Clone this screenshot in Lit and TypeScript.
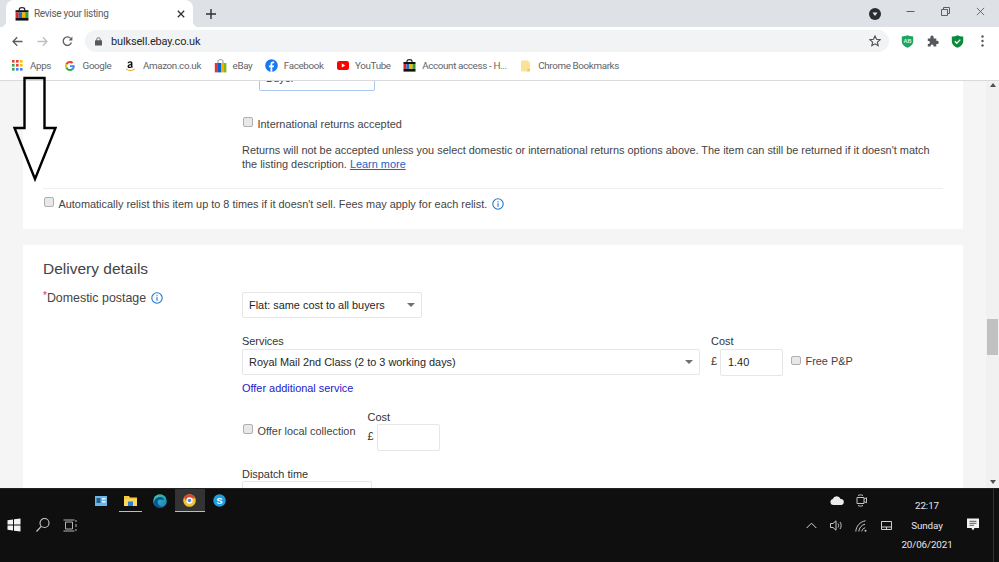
import { LitElement, html, svg, css } from "lit";
import { customElement } from "lit/decorators.js";

const shopBag = (w = 13) => html`<svg width=${w} height=${w} viewBox="0 0 13 13" class="ico">
  <path d="M4 3.5V2.2C4 1.2 4.8.6 6.5.6S9 1.2 9 2.2v1.3" fill="none" stroke="#222" stroke-width="1.1"/>
  <rect x=".5" y="3" width="12" height="2" fill="#111"/>
  <rect x=".5" y="5" width="3" height="5" fill="#d8262c"/><rect x="3.5" y="5" width="3" height="5" fill="#1c6fc4"/>
  <rect x="6.5" y="5" width="3" height="5" fill="#f2b705"/><rect x="9.5" y="5" width="3" height="5" fill="#3f9b3a"/>
  <rect x=".5" y="10" width="12" height="2.6" fill="#111"/></svg>`;

const ebayBag = html`<svg width="13" height="14" viewBox="0 0 13 14" class="ico">
  <path d="M4 4V2.4C4 1.2 4.9.6 6.5.6S9 1.2 9 2.4V4" fill="none" stroke="#8a8a8a" stroke-width="1"/>
  <path d="M.8 4h3.1v9.4H.8z" fill="#e53238"/><path d="M3.9 4H7v9.4H3.9z" fill="#0064d2"/>
  <path d="M7 4h3v9.4H7z" fill="#f5af02"/><path d="M10 4h2.4v9.4H10z" fill="#86b817"/></svg>`;

const googleG = html`<svg width="10" height="10" viewBox="0 0 48 48" class="ico">
  <path fill="#EA4335" d="M24 9.5c3.54 0 6.71 1.22 9.21 3.6l6.85-6.85C35.9 2.38 30.47 0 24 0 14.62 0 6.51 5.38 2.56 13.22l7.98 6.19C12.43 13.72 17.74 9.5 24 9.5z"/>
  <path fill="#4285F4" d="M46.98 24.55c0-1.57-.15-3.09-.38-4.55H24v9.02h12.94c-.58 2.96-2.26 5.48-4.78 7.18l7.73 6c4.51-4.18 7.09-10.36 7.09-17.65z"/>
  <path fill="#FBBC05" d="M10.53 28.59c-.48-1.45-.76-2.99-.76-4.59s.27-3.14.76-4.59l-7.98-6.19C.92 16.46 0 20.12 0 24c0 3.88.92 7.54 2.56 10.78l7.97-6.19z"/>
  <path fill="#34A853" d="M24 48c6.48 0 11.93-2.13 15.89-5.81l-7.73-6c-2.15 1.45-4.92 2.3-8.16 2.3-6.26 0-11.57-4.22-13.47-9.91l-7.98 6.19C6.51 42.62 14.62 48 24 48z"/></svg>`;

const appsGrid = html`<svg width="11" height="11" viewBox="0 0 11 11" class="ico">
  ${[
    ["#ea4335", 0, 0], ["#ea4335", 4, 0], ["#fbbc05", 8, 0],
    ["#34a853", 0, 4], ["#ea4335", 4, 4], ["#fbbc05", 8, 4],
    ["#34a853", 0, 8], ["#4285f4", 4, 8], ["#4285f4", 8, 8],
  ].map(([c, x, y]) => svg`<rect x=${x} y=${y} width="2.6" height="2.6" fill=${c}></rect>`)}</svg>`;

const amazon = html`<svg width="11" height="13" viewBox="0 0 13 14" class="ico">
  <path d="M6.9 5.2V4.6c0-.8-.4-1.2-1.1-1.2-.7 0-1.1.4-1.3 1L3 4.2C3.3 2.9 4.4 2 6 2c1.9 0 2.8.9 2.8 2.4v3.4c0 .4.2.7.5 1L8.2 10c-.4-.3-.7-.6-.9-1-.5.7-1.2 1.1-2.1 1.1-1.3 0-2.2-.8-2.2-2 0-1.7 1.5-2.7 3.9-2.9zm0 1.2c-1.3.1-2 .6-2 1.5 0 .6.3.9.9.9.8 0 1.1-.7 1.1-1.5z" fill="#111"/>
  <path d="M1.6 11.3c3 1.9 6.6 1.9 9.6 0" fill="none" stroke="#f29b1d" stroke-width="1.2" stroke-linecap="round"/></svg>`;

const facebook = html`<svg width="13" height="13" viewBox="0 0 13 13" class="ico">
  <circle cx="6.5" cy="6.5" r="6.3" fill="#1877f2"/>
  <path d="M7.3 12.8V8.2h1.5l.3-1.8H7.3V5.3c0-.6.3-1 1-1h.9V2.7c-.4-.1-.9-.1-1.3-.1-1.5 0-2.4.9-2.4 2.4v1.4H3.9v1.8h1.6v4.600z" fill="#fff"/></svg>`;

const youtube = html`<svg width="12" height="9" viewBox="0 0 12 9" class="ico">
  <rect width="12" height="9" rx="2.2" fill="#f00"/><path d="M4.8 2.4v4.2L8.3 4.5z" fill="#fff"/></svg>`;

const bookmarkFolder = html`<svg width="10" height="12" viewBox="0 0 11 12" class="ico">
  <path d="M1 0h6.5L10 2.5V11a1 1 0 0 1-1 1H1a1 1 0 0 1-1-1V1a1 1 0 0 1 1-1z" fill="#fde293"/><path d="M7 9h3v1.5L8.5 12H7z" fill="#f3c85a"/></svg>`;

const info = (s = 12) => html`<svg width=${s} height=${s} viewBox="0 0 12 12" class="ico">
  <circle cx="6" cy="6" r="5.2" fill="none" stroke="#2277cc" stroke-width="1.1"/>
  <rect x="5.45" y="5.2" width="1.1" height="3.6" fill="#2277cc"/><rect x="5.45" y="3.1" width="1.1" height="1.2" fill="#2277cc"/></svg>`;

const caret = html`<span class="caret"></span>`;

@customElement("app-root")
export class AppRoot extends LitElement {
  static styles = css`
    :host { display: flex; flex-direction: column; width: 999px; height: 562px; position: relative; overflow: hidden;
      font-family: "Liberation Sans", Arial, sans-serif; background: #fff; }
    .ico { display: block; flex: none; }
    .ui { font-family: Roboto, "Noto Sans", sans-serif; }

    .tabbar { height: 27px; background: #dee1e6; display: flex; align-items: center; flex: none; }
    .tab { position: relative; margin-left: 6px; width: 187px; height: 27px; background: #fff; border-radius: 8px 8px 0 0;
      display: flex; align-items: center; box-sizing: border-box; padding: 0 8px 0 9px; }
    .tab::before, .tab::after { content: ""; position: absolute; bottom: 0; width: 6px; height: 6px; }
    .tab::before { left: -6px; background: radial-gradient(circle at 0 0, transparent 6px, #fff 6.5px); }
    .tab::after { right: -6px; background: radial-gradient(circle at 100% 0, transparent 6px, #fff 6.5px); }
    .tab-title { flex: 1; margin-left: 5px; font-size: 10px; letter-spacing: -0.3px; color: #5a5d61; white-space: nowrap; }
    .plus { margin-left: 13px; }
    .spacer { flex: 1; }
    .profile { margin-right: 25px; }
    .win { display: flex; gap: 26px; margin: 0 14px 4px 0; align-items: center; }

    .toolbar { height: 26px; flex: none; display: flex; align-items: center; background: #fff; box-sizing: border-box; padding-top: 2px; }
    .nav { display: flex; align-items: center; gap: 14px; margin-left: 12px; }
    .omni { margin-left: 12px; width: 804px; height: 22px; border-radius: 11px; background: #f1f3f4; display: flex; align-items: center;
      box-sizing: border-box; padding: 0 8px 0 10px; }
    .url { margin-left: 9px; flex: 1; font-size: 11px; letter-spacing: -0.15px; color: #26282b; }
    .exts { display: flex; align-items: center; margin-left: 12px; gap: 12.5px; }
    .dots { margin-left: 4px; }

    .bookmarks { height: 28px; flex: none; box-sizing: border-box; border-bottom: 1px solid #d8dadd; background: #fff; padding-bottom: 2px;
      display: flex; align-items: center; padding-left: 11px; font-size: 9.8px; letter-spacing: -0.35px; color: #5f6368; }
    .bm { display: flex; align-items: center; gap: 6px; margin-right: 12.5px; white-space: nowrap; }
    .bm-ico { width: 13px; display: flex; justify-content: center; flex: none; }

    .viewport { flex: 1; min-height: 0; display: flex; overflow: hidden; background: #f5f5f5; }
    .page { flex: 1; box-sizing: border-box; padding: 0 23px; display: flex; flex-direction: column; color: #444; font-size: 10.92px; line-height: 14px; }
    .card { background: #fff; padding: 0 20px; flex: none; }
    .card1 { margin-top: -16px; padding-bottom: 18px; }
    .card2 { margin-top: 16px; padding-top: 14px; flex: 1; }
    .buyer { margin-left: 216px; width: 116px; height: 26px; box-sizing: border-box; border: 1.5px solid #a9c8ef; border-radius: 2px; padding: 5px 6px; color: #333; }
    .chk { display: block; flex: none; box-sizing: border-box; width: 9.5px; height: 9.5px; background: #e8e8e8; border: 1px solid #b0b0b0; border-radius: 2px; margin: 0 5px 0 1px; position: relative; top: -2px; }
    .row { display: flex; align-items: center; }
    .indent { margin-left: 199px; }
    .intl { margin-top: 26px; }
    .note { margin: 12px 0 0 199px; }
    a { color: #1d62c4; }
    .rule { margin-top: 17px; height: 1px; background: #eee; }
    .relist { margin-top: 8px; }
    .relist .ico { margin-left: 5px; }
    h2 { margin: 0; font-weight: 400; font-size: 15.5px; line-height: 20px; color: #444; }
    .dom { display: flex; margin-top: 11px; }
    .dom-label { width: 199px; flex: none; display: flex; align-items: center; height: 16px; font-size: 12.4px; color: #444; }
    .dom-label .ico { margin-left: 5px; }
    .req { color: #d33; font-size: 10px; align-self: flex-start; line-height: 10px; margin-top: 1px; }
    .select { box-sizing: border-box; height: 26px; border: 1px solid #e6e6e6; border-radius: 2px; display: flex; align-items: center; justify-content: space-between;
      padding: 0 6px; color: #262626; background: #fff; white-space: nowrap; }
    .flat { width: 180px; margin-top: 2px; }
    .caret { width: 0; height: 0; border-left: 4px solid transparent; border-right: 4px solid transparent; border-top: 4px solid #707070; }
    .lbl { line-height: 14px; color: #333; }
    .svc-row { display: flex; margin-top: 16px; }
    .svc { width: 458px; display: flex; flex-direction: column; gap: 1px; margin-right: 11px; }
    .cost { display: flex; flex-direction: column; gap: 1px; }
    .pound { width: 9px; color: #333; margin-bottom: 3px; }
    .input { box-sizing: border-box; width: 63px; height: 27px; border: 1px solid #e6e6e6; border-radius: 2px; padding: 5px 7px; color: #262626; }
    .free { margin-left: 8px; }
    .free-lbl { margin-bottom: 3px; }
    .link { margin-top: 5px; color: #2121c9; }
    .local { margin-top: 16px; display: flex; align-items: center; }
    .local .cost { margin-left: 12px; gap: 0; }
    .local .lbl { line-height: 13px; }
    .dispatch { margin-top: 16px; }
    .dis-sel { width: 130px; }

    .scroll { width: 13px; flex: none; background: #f1f1f1; display: flex; flex-direction: column; align-items: center; }
    .up { margin-top: 2px; border-left: 3.5px solid transparent; border-right: 3.5px solid transparent; border-bottom: 4px solid #505050; }
    .thumb { margin-top: 232px; width: 11px; height: 36px; background: #c1c1c1; }
    .down { margin-top: 125px; border-left: 3.5px solid transparent; border-right: 3.5px solid transparent; border-top: 4px solid #505050; }

    .arrow { position: absolute; left: 12px; top: 75px; }

    .taskbar { height: 74px; flex: none; background: #0f0f0f; display: flex; color: #e8e8e8; font-size: 9.8px; letter-spacing: -0.1px; border-top: 1px solid #222; box-sizing: border-box; }
    .tb-left { flex: 1; display: flex; flex-direction: column; }
    .apps { height: 23px; display: flex; padding-left: 86px; }
    .app { position: relative; width: 29.7px; height: 23px; display: flex; align-items: center; justify-content: center; }
    .app.open::after { content: ""; position: absolute; left: 3px; right: 3px; bottom: 0; height: 1.5px; background: #9cc3ec; }
    .app.active { background: #333; }
    .app.active::after { left: 0; right: 0; }
    .sys { height: 24px; margin-top: 1px; display: flex; align-items: center; padding-left: 7px; }
    .search { margin: 0 12px 0 14px; }
    .tb-right { display: flex; flex: none; width: 200px; }
    .tr-icons { width: 100px; margin-top: -1px; display: grid; grid-template-columns: repeat(4, 25px); grid-auto-rows: 25px; }
    .c { display: flex; align-items: center; justify-content: center; }
    .tr-clock { width: 56px; display: flex; flex-direction: column; align-items: center; padding-top: 7px; line-height: 19.5px; white-space: nowrap; }
    .tr-note { flex: 1; display: flex; padding: 29px 5px 0 11px; }
    .tr-line { align-self: stretch; width: 1px; background: #333; margin: -29px 0 0 auto; }
  `;

  render() {
    return html`
      <div class="tabbar ui">
        <div class="tab">${shopBag(14)}<span class="tab-title">Revise your listing</span>
          <svg width="8" height="8" viewBox="0 0 10 10" class="ico"><path d="M1 1l8 8M9 1l-8 8" stroke="#2e3033" stroke-width="1.6"/></svg>
        </div>
        <svg class="ico plus" width="10" height="10" viewBox="0 0 12 12"><path d="M6 0v12M0 6h12" stroke="#2e3033" stroke-width="1.7"/></svg>
        <div class="spacer"></div>
        <svg class="ico profile" width="12" height="12" viewBox="0 0 12 12"><circle cx="6" cy="6" r="6" fill="#2b2e31"/><path d="M3.5 4.6h5L6 8z" fill="#e8eaed"/></svg>
        <div class="win">
          <svg class="ico" width="9" height="9" viewBox="0 0 9 9"><path d="M.5 4.5h8" stroke="#5c5f62" stroke-width="1"/></svg>
          <svg class="ico" width="9" height="9" viewBox="0 0 9 9"><path d="M.5 2.5h6v6h-6zM2.5 2.5V.5h6v6h-2" fill="none" stroke="#5c5f62" stroke-width="1"/></svg>
          <svg class="ico" width="9" height="9" viewBox="0 0 10 10"><path d="M1 1l8 8M9 1l-8 8" stroke="#5c5f62" stroke-width="1"/></svg>
        </div>
      </div>

      <div class="toolbar ui">
        <div class="nav">
          <svg class="ico" width="11" height="11" viewBox="0 0 11 11"><path d="M10.5 5.5H1M5.2 1.2L1 5.5l4.2 4.3" fill="none" stroke="#5a5d61" stroke-width="1.3"/></svg>
          <svg class="ico" width="11" height="11" viewBox="0 0 11 11"><path d="M.5 5.5H10M5.8 1.2L10 5.5 5.8 9.8" fill="none" stroke="#bdc0c4" stroke-width="1.3"/></svg>
          <svg class="ico" width="11" height="11" viewBox="0 0 11 11"><path d="M9.4 6.5A4.2 4.2 0 1 1 8.6 2.4" fill="none" stroke="#5a5d61" stroke-width="1.3"/><path d="M10.4.6v3.8H6.6z" fill="#5a5d61"/></svg>
        </div>
        <div class="omni">
          <svg class="ico" width="7" height="9" viewBox="0 0 8 10"><path d="M2 4V2.6C2 1.4 2.8.7 4 .7s2 .7 2 1.9V4" fill="none" stroke="#55585c" stroke-width="1"/><rect y="3.7" width="8" height="6" rx=".8" fill="#55585c"/></svg>
          <span class="url">bulksell.ebay.co.uk</span>
          <svg class="ico" width="12" height="12" viewBox="0 0 12 12"><path d="M6 1l1.5 3.3 3.6.4-2.7 2.4.8 3.5L6 8.8 2.8 10.6l.8-3.5L.9 4.7l3.6-.4z" fill="none" stroke="#4c4f53" stroke-width="1.1"/></svg>
        </div>
        <div class="exts">
          <svg class="ico" width="13" height="13" viewBox="0 0 13 13"><path d="M.8 1.4C3 1.4 5 1 6.5.3 8 1 10 1.4 12.2 1.4v5.2c0 3-2.6 5.2-5.7 6.1C3.4 11.8.8 9.6.8 6.6z" fill="#1fa463"/><text x="6.5" y="7.8" text-anchor="middle" font-size="5.5" font-weight="700" fill="#d6f2e2" font-family="Liberation Sans">AB</text></svg>
          <svg class="ico" width="12" height="12" viewBox="0 0 12 12"><path d="M.8 3.4h2.6C3 1.7 3.9.6 5 .6s2 1.1 1.6 2.8h2.7v2.5c1.5-.4 2.4.4 2.4 1.5s-.9 2-2.4 1.5v2.7H6.500c.3-1.400-.4-2.200-1.400-2.200s-1.800.8-1.400 2.200H.8V8.900c1.300.3 2.100-.4 2.100-1.400S2.100 5.800.8 6.100z" fill="#55585c"/></svg>
          <svg class="ico" width="13" height="13" viewBox="0 0 13 13"><path d="M.8 1.6C3 1.6 5 1 6.5.3 8 1 10 1.6 12.2 1.6v4.600c0 3-2.500 5.500-5.700 6.500C3.300 11.700.8 9.200.8 6.200z" fill="#0a8a3c"/><path d="M3.8 6.3l2 2 3.500-3.700" fill="none" stroke="#fff" stroke-width="1.3"/></svg>
          <svg class="ico dots" width="3" height="12" viewBox="0 0 3 12"><circle cx="1.5" cy="1.5" r="1.2" fill="#55585c"/><circle cx="1.5" cy="6" r="1.2" fill="#55585c"/><circle cx="1.5" cy="10.5" r="1.2" fill="#55585c"/></svg>
        </div>
      </div>

      <div class="bookmarks ui">
        <div class="bm"><span class="bm-ico">${appsGrid}</span><span>Apps</span></div>
        <div class="bm"><span class="bm-ico">${googleG}</span><span>Google</span></div>
        <div class="bm"><span class="bm-ico">${amazon}</span><span>Amazon.co.uk</span></div>
        <div class="bm"><span class="bm-ico">${ebayBag}</span><span>eBay</span></div>
        <div class="bm"><span class="bm-ico">${facebook}</span><span>Facebook</span></div>
        <div class="bm"><span class="bm-ico">${youtube}</span><span>YouTube</span></div>
        <div class="bm"><span class="bm-ico">${shopBag(13)}</span><span>Account access - H...</span></div>
        <div class="bm"><span class="bm-ico">${bookmarkFolder}</span><span>Chrome Bookmarks</span></div>
      </div>

      <div class="viewport">
        <div class="page">
          <section class="card card1">
            <div class="buyer">Buyer</div>
            <div class="row indent intl"><span class="chk"></span><span>International returns accepted</span></div>
            <p class="note">Returns will not be accepted unless you select domestic or international returns options above. The item can still be returned if it doesn't match the listing description. <a href="#">Learn more</a></p>
            <div class="rule"></div>
            <div class="row relist"><span class="chk"></span><span>Automatically relist this item up to 8 times if it doesn't sell. Fees may apply for each relist.</span>${info()}</div>
          </section>
          <section class="card card2">
            <h2>Delivery details</h2>
            <div class="dom">
              <div class="dom-label"><span class="req">*</span><span>Domestic postage</span>${info()}</div>
              <div class="select flat"><span>Flat: same cost to all buyers</span>${caret}</div>
            </div>
            <div class="indent">
              <div class="svc-row">
                <div class="svc"><span class="lbl">Services</span>
                  <div class="select"><span>Royal Mail 2nd Class (2 to 3 working days)</span>${caret}</div></div>
                <div class="cost"><span class="lbl">Cost</span>
                  <div class="row"><span class="pound">£</span><div class="input">1.40</div>
                    <span class="chk free"></span><span class="free-lbl">Free P&amp;P</span></div></div>
              </div>
              <div class="link">Offer additional service</div>
              <div class="local">
                <span class="chk"></span><span>Offer local collection</span>
                <div class="cost"><span class="lbl">Cost</span>
                  <div class="row"><span class="pound">£</span><div class="input"></div></div></div>
              </div>
              <div class="dispatch lbl">Dispatch time</div>
              <div class="select dis-sel"></div>
            </div>
          </section>
        </div>
        <div class="scroll"><span class="up"></span><span class="thumb"></span><span class="down"></span></div>
      </div>

      <svg class="arrow" width="46" height="108" viewBox="0 0 46 108">
        <path d="M12.5 3h20V53h11L23 104 2.5 53h10z" fill="none" stroke="#000" stroke-width="2.4"/>
      </svg>

      <div class="taskbar ui">
        <div class="tb-left">
          <div class="apps">
            <div class="app"><svg class="ico" width="12" height="10" viewBox="0 0 12 10"><rect width="12" height="10" fill="#6fb6e6"/><rect x="1.5" y="2" width="4" height="5" fill="#1f5f95"/><rect x="7" y="2" width="3.5" height="1.5" fill="#e8f3fb"/><rect x="7" y="5" width="3.5" height="1.5" fill="#e8f3fb"/></svg></div>
            <div class="app open"><svg class="ico" width="13" height="12" viewBox="0 0 13 12"><path d="M0 1h5l1 1.5h7V11H0z" fill="#f7c843"/><rect x="0" y="4" width="13" height="7" fill="#fbd75b"/><rect x="4" y="6.5" width="5" height="4.5" fill="#2b7cd3"/></svg></div>
            <div class="app"><svg class="ico" width="14" height="14" viewBox="0 0 14 14"><defs><linearGradient id="e" x1="0" y1="0" x2="1" y2="1"><stop offset="0" stop-color="#3bd6a0"/><stop offset="1" stop-color="#1976c9"/></linearGradient></defs><circle cx="7" cy="7" r="6.8" fill="url(#e)"/><path d="M1 9c.2-3.8 3-6 6-6 2.5 0 4 1.5 4 2.8H6.5C4.5 5.8 4 8.5 5.5 10.5 6.8 12.3 9 13 11 12.500 9.500 13.800 7 14 5 13.200 3 12.400 1.200 11 1 9z" fill="#0c4f9e"/></svg></div>
            <div class="app open active"><svg class="ico" width="13" height="13" viewBox="0 0 13 13"><circle cx="6.5" cy="6.5" r="6.3" fill="#f2c230"/><path d="M6.5.2A6.3 6.3 0 0 0 1 3.4l2.7 4.3.9-3.5h7.5A6.3 6.3 0 0 0 6.5.2z" fill="#dc4437"/><circle cx="6.5" cy="6.5" r="3.2" fill="#fff"/><circle cx="6.5" cy="6.5" r="1.8" fill="#4a8bf0"/></svg></div>
            <div class="app"><svg class="ico" width="13" height="13" viewBox="0 0 13 13"><circle cx="6.5" cy="6.5" r="6.2" fill="#1ca0e3"/><text x="6.5" y="9.7" text-anchor="middle" font-size="9" font-weight="700" fill="#fff" font-family="Liberation Sans">S</text></svg></div>
          </div>
          <div class="sys">
            <svg class="ico" width="14" height="14" viewBox="0 0 14 14"><path d="M.5 2.3L6 1.500v5H.5zM7 1.300L13.500.4v6.100H7zM.5 7.500H6v5l-5.500-.8zM7 7.500h6.500v6.100L7 12.700z" fill="#f2f2f2"/></svg>
            <svg class="ico search" width="16" height="16" viewBox="0 0 16 16"><circle cx="9.5" cy="6" r="4.5" fill="none" stroke="#c8c8c8" stroke-width="1.1"/><path d="M6.2 9.3L1.5 14.5" stroke="#c8c8c8" stroke-width="1.2"/></svg>
            <svg class="ico" width="14" height="13" viewBox="0 0 14 13"><path d="M2.5 3h7v7h-7zM.5 1h11M.5 12h11M13 1v2M13 5v3M13 10v2" fill="none" stroke="#b4b4b4" stroke-width="1"/></svg>
          </div>
        </div>
        <div class="tb-right">
          <div class="tr-icons">
            <div class="c"></div>
            <div class="c"><svg class="ico" width="14" height="9" viewBox="0 0 14 9"><path d="M3 9a3 3 0 0 1-.3-5.900A4.200 4.200 0 0 1 10.600 3 3 3 0 0 1 11 9z" fill="#ececec"/></svg></div>
            <div class="c"><svg class="ico" width="11" height="13" viewBox="0 0 11 13"><path d="M2 1.500C3 .7 6 .7 7 1.500M1 3.500h7v6H1zM8 5l2.500-1.200v5L8 7.600M2 11.500c1 .8 4 .8 5 0" fill="none" stroke="#c4c4c4" stroke-width="1"/></svg></div>
            <div class="c"></div>
            <div class="c"><svg class="ico" width="11" height="7" viewBox="0 0 11 7"><path d="M.7 6l4.800-4.800L10.300 6" fill="none" stroke="#d6d6d6" stroke-width="1"/></svg></div>
            <div class="c"><svg class="ico" width="13" height="11" viewBox="0 0 13 11"><path d="M.5 3.500h2.500L6 .8v9.400L3 7.500H.5zM8 3.500c.8 1 .8 3 0 4M10 2c1.500 2 1.500 5 0 7" fill="none" stroke="#c8c8c8" stroke-width="1"/></svg></div>
            <div class="c"><svg class="ico" width="13" height="12" viewBox="0 0 13 12"><path d="M.8 11.500C1.200 6 5 1.800 10.500.8M3.800 11.500C4 8 6.500 5 10 4.200M6.800 11.500c.2-1.800 1.500-3.300 3.300-3.700" fill="none" stroke="#c8c8c8" stroke-width="1"/><circle cx="10.5" cy="10.8" r="1" fill="#c8c8c8"/></svg></div>
            <div class="c"><svg class="ico" width="11" height="9" viewBox="0 0 11 9"><path d="M.5.500h10v8H.5zM.5 6h10M5.500 6v2.500" fill="none" stroke="#d0d0d0" stroke-width="1"/></svg></div>
          </div>
          <div class="tr-clock"><span>22:17</span><span>Sunday</span><span>20/06/2021</span></div>
          <div class="tr-note">
            <svg class="ico" width="14" height="13" viewBox="0 0 13 13"><path d="M.5.500h12v9.500H8L6.500 12.500 5 10H.5z" fill="#f2f2f2"/><path d="M3 3.300h7M3 5.300h7M3 7.300h4.500" stroke="#333" stroke-width=".8"/></svg>
            <span class="tr-line"></span>
          </div>
        </div>
      </div>
    `;
  }
}
